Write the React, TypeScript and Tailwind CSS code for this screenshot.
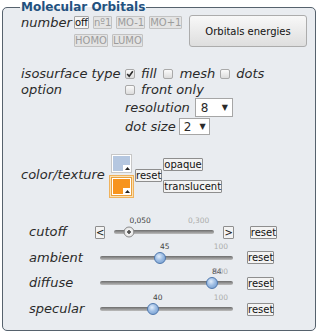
import React from "react";

function SmallBtn({ children, active }: { children: React.ReactNode; active?: boolean }) {
  return (
    <span
      className={
        active
          ? "h-[13px] px-0 border border-[#a4a4a4] bg-[#f4f4f4] text-[#111] text-[10px] leading-[11px] rounded-[1px] flex items-center"
          : "h-[13px] px-0 border border-[#c2c2c2] bg-[#e4e4e4] text-[#9c9c9c] text-[10px] leading-[11px] rounded-[1px] flex items-center"
      }
    >
      {children}
    </span>
  );
}

function Btn({ children }: { children: React.ReactNode }) {
  return (
    <span className="h-[13px] px-0 border border-[#8e8e8e] bg-[#f3f3f3] text-[#111] text-[10px] leading-[11px] rounded-[1px] flex items-center not-italic">
      {children}
    </span>
  );
}

function Check({ checked }: { checked?: boolean }) {
  return (
    <span className="w-[10px] h-[10px] shrink-0 border border-[#a9a9a9] rounded-[2px] bg-[linear-gradient(#fbfbfb,#dcdcdc)] flex items-center justify-center">
      {checked && (
        <svg width="8" height="8" viewBox="0 0 8 8">
          <path d="M1.2 4 L3.2 6.2 L6.8 1.2" stroke="#2a2a2a" strokeWidth="1.6" fill="none" />
        </svg>
      )}
    </span>
  );
}

function Notch() {
  return (
    <span className="absolute right-0 bottom-0 w-[8px] h-[7px] bg-white flex items-center justify-center">
      <svg width="5" height="3" viewBox="0 0 5 3">
        <path d="M0 3 L2.5 0 L5 3 Z" fill="#222" />
      </svg>
    </span>
  );
}

function Track({
  width,
  pos,
  value,
  max,
  white,
}: {
  width: number;
  pos: number;
  value: string;
  max: string;
  white?: boolean;
}) {
  return (
    <div className="relative h-full flex items-center" style={{ width }}>
      <div className="w-full h-[4px] rounded-full bg-[linear-gradient(#6c6c6c,#bdbdbd)]" />
      <span
        className="absolute top-[-3px] text-[7.5px] leading-[9px] text-[#444] not-italic"
        style={{ left: pos }}
      >
        {value}
      </span>
      <span className="absolute top-[-3px] right-[5px] text-[7.5px] leading-[9px] text-[#acacac] not-italic">
        {max}
      </span>
      <span
        className={
          white
            ? "absolute top-1/2 -translate-y-1/2 -translate-x-1/2 w-[11px] h-[11px] rounded-full border border-[#8a8a8a] bg-[radial-gradient(circle_at_50%_50%,#555_0px,#555_1.5px,#f4f4f4_2px,#d9d9d9_100%)]"
            : "absolute top-1/2 -translate-y-1/2 -translate-x-1/2 w-[12px] h-[12px] rounded-full border border-[#4f78ad] bg-[radial-gradient(circle_at_40%_35%,#e3eefb_0px,#9dbde4_45%,#6c95c9_100%)]"
        }
        style={{ left: pos }}
      />
    </div>
  );
}

export default function App() {
  return (
    <div className="w-[319px] h-[336px] bg-white font-['DejaVu_Sans',sans-serif] text-[#2a2a2a]">
      <fieldset className="ml-[2px] w-[314px] h-[331px] border border-[#56626d] rounded-[5px] bg-[#e9ecf0] pl-[18px] pr-[4px] pt-0 pb-0">
        <legend className="ml-[-1px] px-[1px] text-[12px] font-bold leading-[15px] text-[#23527f]">
          Molecular Orbitals
        </legend>

        {/* number row */}
        <div className="flex items-start h-[33px]">
          <span className="w-[53px] italic text-[13px] leading-[15px]">number</span>
          <div className="w-[115px] mt-[1px] flex flex-col gap-[5px]">
            <div className="flex gap-[4px]">
              <SmallBtn active>off</SmallBtn>
              <SmallBtn>nº1</SmallBtn>
              <SmallBtn>MO-1</SmallBtn>
              <SmallBtn>MO+1</SmallBtn>
            </div>
            <div className="flex gap-[4px]">
              <SmallBtn>HOMO</SmallBtn>
              <SmallBtn>LUMO</SmallBtn>
            </div>
          </div>
          <button className="w-[118px] h-[32px] border border-[#acacac] rounded-[3px] bg-[linear-gradient(#f8f8f8,#dedede)] text-[10px] text-[#111]">
            Orbitals energies
          </button>
        </div>

        {/* isosurface row */}
        <div className="flex mt-[18px] italic text-[13px]">
          <div className="w-[104px] flex flex-col leading-[16px]">
            <span>isosurface type</span>
            <span>option</span>
          </div>
          <div className="flex flex-col">
            <div className="flex items-center h-[16px]">
              <Check checked />
              <span className="ml-[6px]">fill</span>
              <span className="ml-[6px]">
                <Check />
              </span>
              <span className="ml-[7px]">mesh</span>
              <span className="ml-[5px]">
                <Check />
              </span>
              <span className="ml-[6px]">dots</span>
            </div>
            <div className="flex items-center h-[16px]">
              <Check />
              <span className="ml-[6px]">front only</span>
            </div>
            <div className="flex items-center h-[19px]">
              <span>resolution</span>
              <div className="ml-[5px] w-[38px] h-[19px] bg-white border border-[#a6a6a6] pl-[5px] pr-[4px] flex items-center justify-between not-italic text-[12px]">
                <span>8</span>
                <span className="text-[8px]">▼</span>
              </div>
            </div>
            <div className="flex items-center h-[17px] mt-[1px]">
              <span>dot size</span>
              <div className="ml-[3px] w-[31px] h-[17px] bg-white border border-[#a6a6a6] pl-[4px] pr-[3px] flex items-center justify-between not-italic text-[12px]">
                <span>2</span>
                <span className="text-[8px]">▼</span>
              </div>
            </div>
          </div>
        </div>

        {/* color/texture row */}
        <div className="flex items-center mt-[17px]">
          <span className="w-[88px] italic text-[13px] leading-[16px]">color/texture</span>
          <div className="flex flex-col">
            <div className="p-[1px] border border-transparent">
              <div className="relative w-[21px] h-[19px] border border-[#c7c7c7] bg-white p-[1px]">
                <div className="w-full h-full bg-[#b5c7e0]" />
                <Notch />
              </div>
            </div>
            <div className="p-[1px] border border-[#f0b25c] bg-[#fbe0b0]">
              <div className="relative w-[21px] h-[19px] border border-[#e8a040] bg-white p-[1px]">
                <div className="w-full h-full bg-[#f7941d]" />
                <Notch />
              </div>
            </div>
          </div>
          <div className="ml-[1px]">
            <Btn>reset</Btn>
          </div>
          <div className="ml-[1px] flex flex-col gap-[9px]">
            <div className="flex">
              <Btn>opaque</Btn>
            </div>
            <div className="flex">
              <Btn>translucent</Btn>
            </div>
          </div>
        </div>

        {/* sliders */}
        <div className="mt-[21px] flex flex-col italic text-[13px]">
          <div className="flex items-center h-[26px]">
            <span className="ml-[8px] w-[66px]">cutoff</span>
            <Btn>&lt;</Btn>
            <div className="ml-[9px] h-full">
              <Track width={100} pos={15} value="0,050" max="0,300" white />
            </div>
            <div className="ml-[9px]">
              <Btn>&gt;</Btn>
            </div>
            <div className="ml-[16px]">
              <Btn>reset</Btn>
            </div>
          </div>
          <div className="flex items-center h-[25px]">
            <span className="ml-[8px] w-[66px]">ambient</span>
            <div className="ml-[5px] h-full">
              <Track width={133} pos={60} value="45" max="100" />
            </div>
            <div className="ml-[14px]">
              <Btn>reset</Btn>
            </div>
          </div>
          <div className="flex items-center h-[26px]">
            <span className="ml-[8px] w-[66px]">diffuse</span>
            <div className="ml-[5px] h-full">
              <Track width={133} pos={112} value="84" max="100" />
            </div>
            <div className="ml-[14px]">
              <Btn>reset</Btn>
            </div>
          </div>
          <div className="flex items-center h-[26px]">
            <span className="ml-[8px] w-[66px]">specular</span>
            <div className="ml-[5px] h-full">
              <Track width={133} pos={53} value="40" max="100" />
            </div>
            <div className="ml-[14px]">
              <Btn>reset</Btn>
            </div>
          </div>
        </div>
      </fieldset>
    </div>
  );
}
